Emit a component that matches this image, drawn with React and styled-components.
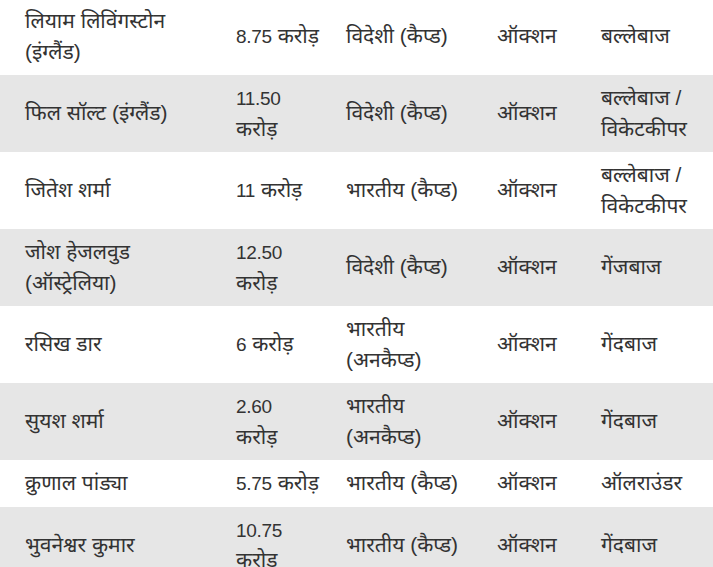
import React from "react";
import styled, { createGlobalStyle } from "styled-components";

const GlobalStyle = createGlobalStyle`
  html, body {
    margin: 0;
    padding: 0;
    background: #ffffff;
    overflow: hidden;
  }
`;

const Wrapper = styled.div`
  width: 713px;
  margin-top: -2px;
  font-family: "Liberation Sans", "Noto Sans Devanagari", Arial, sans-serif;
  color: #333333;
`;

const Table = styled.table`
  width: 713px;
  border-collapse: collapse;
  table-layout: fixed;
`;

const Row = styled.tr`
  background: ${(props) => (props.$shaded ? "#e6e6e6" : "#ffffff")};
`;

const Cell = styled.td`
  padding: 8px 12px;
  font-size: 21px;
  line-height: 30.5px;
  vertical-align: middle;
  text-align: left;
  white-space: nowrap;

  &:first-child {
    padding-left: 25px;
  }
`;

// digits in the source are set smaller than the Devanagari text
const Amount = styled.span`
  font-size: 19px;
  line-height: 1;
  letter-spacing: -0.3px;
`;

const columns = [224, 110, 151, 104, 124];

const players = [
  {
    name: ["लियाम लिविंगस्टोन", "(इंग्लैंड)"],
    amount: "8.75",
    price: ["करोड़"],
    inline: true,
    type: ["विदेशी (कैप्ड)"],
    mode: "ऑक्शन",
    role: ["बल्लेबाज"],
  },
  {
    name: ["फिल सॉल्ट (इंग्लैंड)"],
    amount: "11.50",
    price: ["करोड़"],
    type: ["विदेशी (कैप्ड)"],
    mode: "ऑक्शन",
    role: ["बल्लेबाज /", "विकेटकीपर"],
  },
  {
    name: ["जितेश शर्मा"],
    amount: "11",
    price: ["करोड़"],
    inline: true,
    type: ["भारतीय (कैप्ड)"],
    mode: "ऑक्शन",
    role: ["बल्लेबाज /", "विकेटकीपर"],
  },
  {
    name: ["जोश हेजलवुड", "(ऑस्ट्रेलिया)"],
    amount: "12.50",
    price: ["करोड़"],
    type: ["विदेशी (कैप्ड)"],
    mode: "ऑक्शन",
    role: ["गेंजबाज"],
  },
  {
    name: ["रसिख डार"],
    amount: "6",
    price: ["करोड़"],
    inline: true,
    type: ["भारतीय", "(अनकैप्ड)"],
    mode: "ऑक्शन",
    role: ["गेंदबाज"],
  },
  {
    name: ["सुयश शर्मा"],
    amount: "2.60",
    price: ["करोड़"],
    type: ["भारतीय", "(अनकैप्ड)"],
    mode: "ऑक्शन",
    role: ["गेंदबाज"],
  },
  {
    name: ["क्रुणाल पांड्या"],
    amount: "5.75",
    price: ["करोड़"],
    inline: true,
    type: ["भारतीय (कैप्ड)"],
    mode: "ऑक्शन",
    role: ["ऑलराउंडर"],
  },
  {
    name: ["भुवनेश्वर कुमार"],
    amount: "10.75",
    price: ["करोड़"],
    type: ["भारतीय (कैप्ड)"],
    mode: "ऑक्शन",
    role: ["गेंदबाज"],
  },
];

const Lines = ({ lines }) =>
  lines.map((line, i) => (
    <React.Fragment key={i}>
      {i > 0 && <br />}
      {line}
    </React.Fragment>
  ));

const App = () => {
  return (
    <Wrapper>
      <GlobalStyle />
      <Table>
        <colgroup>
          {columns.map((w, i) => (
            <col key={i} style={{ width: w }} />
          ))}
        </colgroup>
        <tbody>
          {players.map((p, index) => (
            <Row key={index} $shaded={index % 2 === 1}>
              <Cell>
                <Lines lines={p.name} />
              </Cell>
              <Cell>
                <Amount>{p.amount}</Amount>
                {p.inline ? " " : <br />}
                {p.price}
              </Cell>
              <Cell>
                <Lines lines={p.type} />
              </Cell>
              <Cell>{p.mode}</Cell>
              <Cell>
                <Lines lines={p.role} />
              </Cell>
            </Row>
          ))}
        </tbody>
      </Table>
    </Wrapper>
  );
};

export default App;
